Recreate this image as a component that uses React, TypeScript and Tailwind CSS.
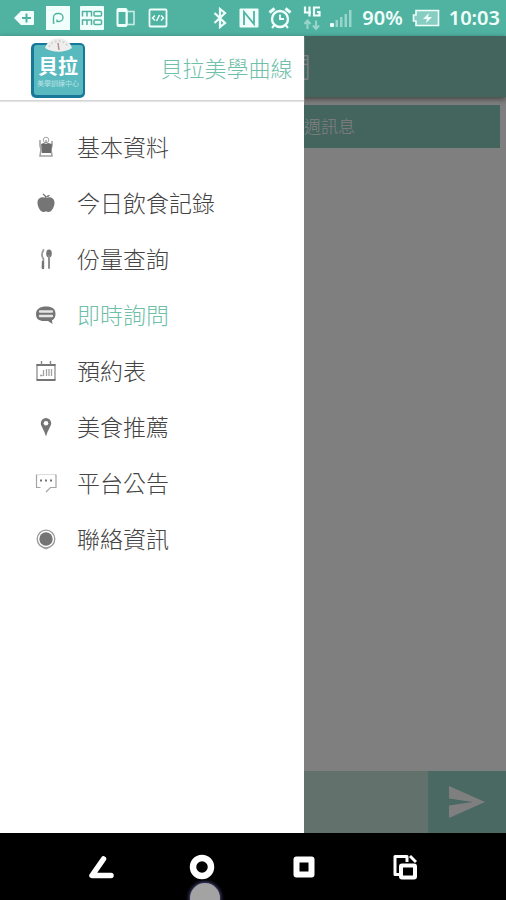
import type { ReactNode } from "react";

interface MenuItem {
  label: string;
  icon: ReactNode;
  active?: boolean;
}

const menuItems: MenuItem[] = [
  {
    label: "基本資料",
    icon: (
      <>
        <path d="M5 4v5c0 2 1 3 1 5l-1 6h12l-1-6c0-2 1-3 1-5V5" fill="none" stroke="#a3a3a3" strokeWidth="1.6" />
        <circle cx="11" cy="4" r="2.8" fill="#fff" stroke="#a3a3a3" />
        <path d="M6 8l3-1 2 1 2-1 4 1-1 9H7z" fill="#6b6b6b" />
        <path d="M11 4v3" stroke="#777" />
      </>
    ),
  },
  {
    label: "今日飲食記錄",
    icon: (
      <>
        <path d="M11 6c3-1.500 8.500-1 8.500 5 0 4-3 9-6 9-1 0-1.500-.5-2.500-.5s-1.500.5-2.500.5c-3 0-6-5-6-9 0-6 5.500-6.500 8.500-5z" fill="#757575" />
        <path d="M11 6C11 4 9.500 3 8 2" fill="none" stroke="#757575" strokeWidth="1.5" />
        <path d="M11 5c1-2 3-2 4-2-1 2-2 2-4 2z" fill="#757575" />
      </>
    ),
  },
  {
    label: "份量查詢",
    icon: (
      <>
        <ellipse cx="14" cy="5.5" rx="2.8" ry="4" fill="#757575" />
        <path d="M14 8v12" stroke="#8f8f8f" strokeWidth="2" strokeLinecap="round" />
        <path d="M8.500 2C6 6 7 9 8.500 11L7.500 19.500" fill="none" stroke="#999" strokeWidth="1.8" strokeLinecap="round" />
        <path d="M8 14v6" stroke="#757575" strokeWidth="2.4" strokeLinecap="round" />
      </>
    ),
  },
  {
    label: "即時詢問",
    active: true,
    icon: (
      <>
        <path d="M11 2.500c6 0 9.500 2 9.500 7.500 0 3-1 5-3.500 6.200l.5 3.800-4.500-3H9c-5 0-8-2-8-7s4-7.500 10-7.500z" fill="#757575" />
        <path d="M5 7.500h12M5 12h12" stroke="#e5e5e5" strokeWidth="2.4" strokeLinecap="round" />
      </>
    ),
  },
  {
    label: "預約表",
    icon: (
      <>
        <path d="M2 4.500h18v15H2z" fill="none" stroke="#858585" strokeWidth="1.2" />
        <path d="M1.500 5h19M1.500 20h19" stroke="#757575" strokeWidth="1.8" />
        <path d="M6.500 1v4M15.500 1v4" stroke="#858585" strokeWidth="1.4" />
        <path d="M5 15.500h2.500M8.500 10v6M11.500 9v7M14 9v7M16.500 9v7" stroke="#a3a3a3" strokeWidth="1.3" />
      </>
    ),
  },
  {
    label: "美食推薦",
    icon: (
      <>
        <path d="M11 2a5.200 5.200 0 0 1 5.200 5.200c0 3-3.200 6-5.200 13.300-2-7.300-5.200-10.300-5.200-13.300A5.200 5.200 0 0 1 11 2z" fill="#757575" />
        <circle cx="11" cy="7.2" r="2.3" fill="#fff" />
      </>
    ),
  },
  {
    label: "平台公告",
    icon: (
      <>
        <path d="M2.500 3h-1v12.500h4M20 3h1v12.500h-5.500L11 20" fill="none" stroke="#a3a3a3" strokeWidth="1.2" />
        <path d="M3 2.500h17" stroke="#ddd" />
        <path d="M5 8.500h2M10 8.500h2M15 8.500h2" stroke="#757575" strokeWidth="2" />
      </>
    ),
  },
  {
    label: "聯絡資訊",
    icon: (
      <>
        <circle cx="11" cy="11" r="8.8" fill="none" stroke="#999" strokeWidth="1.3" />
        <circle cx="11" cy="11" r="6.7" fill="#757575" />
        <path d="M8 19.500l3 1.500 3-1.500" fill="none" stroke="#999" />
      </>
    ),
  },
];

function StatusBar() {
  return (
    <header className="flex h-9 items-center justify-between bg-[#50b3a2] pr-[6px] pl-[14px] text-[#f0fffb]">
      <div className="flex items-center gap-3">
        <svg width="20" height="24" viewBox="0 0 20 24" aria-hidden="true">
          <path d="M7 5h12a1 1 0 0 1 1 1v12a1 1 0 0 1-1 1H7l-7-7z" fill="currentColor" />
          <path d="M8 12h9M12.500 7.500v9" stroke="#50b3a2" strokeWidth="2" />
        </svg>
        <div className="flex items-center gap-[10px]">
          <svg width="24" height="24" viewBox="0 0 24 24" aria-hidden="true">
            <rect width="24" height="24" fill="currentColor" />
            <path d="M8.500 17H7.500V11.500a4 4 0 0 1 4-4h1.500a4 4 0 0 1 0 8H11v-2" fill="none" stroke="#50b3a2" strokeWidth="1.4" />
          </svg>
          <svg width="24" height="24" viewBox="0 0 24 24" aria-hidden="true">
            <rect width="24" height="24" rx="1" fill="currentColor" />
            <g fill="none" stroke="#50b3a2" strokeWidth="1.5">
              <path d="M2.500 10.500V5.500h9v5M7 5.500v5" />
              <rect x="14" y="5.5" width="7.500" height="4.500" rx="1" />
              <path d="M2.500 19v-5h9v5M7 14v5" />
              <rect x="14" y="14" width="7.500" height="4.500" rx="1" />
            </g>
          </svg>
        </div>
        <svg width="20" height="22" viewBox="0 0 20 22" fill="none" stroke="currentColor" aria-hidden="true">
          <rect x="1.5" y="2" width="9" height="17" rx="1" strokeWidth="2" />
          <path d="M2 4h8M2 18h8" strokeWidth="2" />
          <rect x="11" y="4.5" width="7" height="13" strokeWidth="1.6" opacity=".75" />
        </svg>
        <svg width="20" height="20" viewBox="0 0 20 20" fill="none" stroke="currentColor" aria-hidden="true">
          <rect x="1.5" y="1.5" width="17" height="17" rx="1" strokeWidth="1.8" />
          <path d="M7 7.500L4.500 10 7 12.500M13 7.500l2.500 2.500-2.500 2.500M8.500 13l3-6" strokeWidth="1.5" />
        </svg>
      </div>
      <div className="flex items-center gap-[9px]">
        <div className="flex items-center gap-3">
          <svg width="14" height="22" viewBox="0 0 14 22" fill="none" stroke="currentColor" strokeWidth="2.2" aria-hidden="true">
            <path d="M1.500 6l10.500 10-5 4v-18L12 6 1.500 16" />
          </svg>
          <svg width="20" height="20" viewBox="0 0 20 20" aria-hidden="true">
            <rect x=".5" y=".5" width="19" height="19" rx="1" fill="currentColor" />
            <path d="M5 17V4L15 16V3" fill="none" stroke="#50b3a2" strokeWidth="1.8" />
          </svg>
        </div>
        <svg width="24" height="24" viewBox="0 0 24 24" fill="none" stroke="currentColor" aria-hidden="true">
          <circle cx="12" cy="13" r="8" strokeWidth="2.4" />
          <path d="M12 8.500V13h4" strokeWidth="1.8" />
          <path d="M1.500 6.500l5-4M22.500 6.500l-5-4" strokeWidth="3" />
          <path d="M6.500 19L4 22M17.500 19l2.500 3" strokeWidth="2" />
        </svg>
        <div className="flex items-center gap-2 pl-0.5">
          <svg width="18" height="26" viewBox="0 0 18 26" fill="none" stroke="currentColor" aria-hidden="true">
            <path d="M2 1.500v6h6M6.500 1.500v10M17 2.500h-6v8h5.500V7H14" strokeWidth="2.2" />
            <g opacity=".45" strokeWidth="2">
              <path d="M4.500 24v-8M1.500 19l3-3.500 3 3.500M13 15.500v8M10 20.500l3 3.500 3-3.500" />
            </g>
          </svg>
          <svg width="24" height="20" viewBox="0 0 24 20" fill="currentColor" aria-hidden="true">
            <rect x="1" y="15" width="4" height="4" rx="1" />
            <g opacity=".45">
              <rect x="6.500" y="12" width="2.500" height="7" />
              <rect x="11" y="9" width="2.500" height="10" />
              <rect x="15.500" y="6" width="2.500" height="13" />
              <rect x="20" y="2" width="2.500" height="17" />
            </g>
          </svg>
        </div>
        <span className="text-xl leading-none font-semibold">90%</span>
        <svg width="28" height="18" viewBox="0 0 28 18" fill="none" stroke="currentColor" aria-hidden="true">
          <path d="M4 1.500h22.500v15H4V12H1.500V6H4z" strokeWidth="1.6" fill="currentColor" fillOpacity=".35" />
          <path d="M17 4l-6 6h4l-1 4 6-6h-4z" fill="currentColor" stroke="none" />
        </svg>
        <span className="text-xl leading-none font-semibold">10:03</span>
      </div>
    </header>
  );
}

function Logo() {
  return (
    <svg width="54" height="60" viewBox="0 0 54 60" role="img" aria-label="貝拉">
      <rect x="0" y="5" width="54" height="55" rx="5" fill="#18789a" />
      <rect x="3" y="7" width="49" height="50" rx="3" fill="#58b9bf" />
      <path d="M14 10C18-3 37-3 41 10c-8 5-19 5-27 0z" fill="#eee" />
      <path d="M18 9c3-8 16-8 19 0" fill="none" stroke="#d4d4d4" strokeWidth="2" strokeDasharray="2 2" />
      <path d="M28 12l-1-7" stroke="#b8908c" strokeWidth="1.5" />
      <text x="27" y="36" textAnchor="middle" fontSize="20" fontWeight="700" fill="#fff">
        貝拉
      </text>
      <text x="27" y="48" textAnchor="middle" fontSize="7" fill="#b9e4e4">
        美學訓練中心
      </text>
    </svg>
  );
}

function ChatPage() {
  return (
    <main className="flex flex-1 flex-col bg-white">
      <div className="flex h-[61px] items-center justify-center bg-[#86cabc] pl-1 shadow-[0_2px_6px_rgba(0,0,0,0.5)]">
        <h1 className="text-[28px] font-light text-white">即時詢問</h1>
      </div>
      <button className="mx-[6px] mt-2 h-[43px] bg-[#86cabc] text-[17px] font-light text-white">
        點此可以載入最近一週訊息
      </button>
      <div className="flex-1" />
      <form className="flex h-[62px]">
        <input aria-label="訊息" className="min-w-0 flex-1 bg-[#c6e2d8] px-3 outline-none" />
        <button type="button" aria-label="傳送" className="flex w-[78px] items-center justify-center bg-[#94d2c4]">
          <svg width="36" height="32" viewBox="0 0 36 32" fill="#fff" aria-hidden="true">
            <path d="M0 0l36 16L0 32V19.500L24 16 0 12.500z" />
          </svg>
        </button>
      </form>
    </main>
  );
}

function Drawer() {
  return (
    <aside className="absolute inset-y-0 left-0 flex w-3/5 flex-col bg-white">
      <div className="flex h-[65px] items-center justify-between border-b border-[#d4d4d4] pr-[11px] pl-[31px] shadow-[0_1px_1px_#e5e5e5]">
        <Logo />
        <h2 className="text-[22px] font-light text-[#6fc0a8]">貝拉美學曲線</h2>
      </div>
      <nav className="pt-[18px]">
        <ul>
          {menuItems.map((item) => (
            <li key={item.label}>
              <a href="#" className="flex h-14 items-center gap-5 pl-[35px]">
                <svg width="22" height="22" viewBox="0 0 22 22" aria-hidden="true">
                  {item.icon}
                </svg>
                <span
                  className={
                    item.active
                      ? "text-[23px] leading-none font-light text-[#6fc0a8]"
                      : "text-[23px] leading-none font-light text-[#444]"
                  }
                >
                  {item.label}
                </span>
              </a>
            </li>
          ))}
        </ul>
      </nav>
    </aside>
  );
}

function NavBar() {
  return (
    <footer className="relative grid h-[67px] grid-cols-4 overflow-hidden bg-black px-[10%] text-white">
      <button aria-label="返回" className="flex items-center justify-center">
        <svg width="26" height="24" viewBox="0 0 26 24" fill="none" stroke="currentColor" strokeWidth="5.500" strokeLinecap="round" strokeLinejoin="round" aria-hidden="true">
          <path d="M15.500 4L4 20.500h19" />
        </svg>
      </button>
      <button aria-label="主畫面" className="flex items-center justify-center">
        <svg width="26" height="26" viewBox="0 0 26 26" fill="none" stroke="currentColor" strokeWidth="6.500" aria-hidden="true">
          <circle cx="13" cy="13" r="9" />
        </svg>
      </button>
      <button aria-label="最近" className="flex items-center justify-center">
        <svg width="22" height="22" viewBox="0 0 22 22" fill="none" stroke="currentColor" strokeWidth="6" aria-hidden="true">
          <rect x="3.500" y="3.500" width="15" height="15" strokeLinejoin="round" />
        </svg>
      </button>
      <button aria-label="小型應用程式" className="flex items-center justify-center">
        <svg width="24" height="26" viewBox="0 0 24 26" fill="none" stroke="currentColor" aria-hidden="true">
          <path d="M14 8V2.500H2v18h4" strokeWidth="3" strokeLinejoin="round" />
          <rect x="8" y="11.500" width="14" height="12" rx="1" strokeWidth="4" />
          <path d="M17 2l6 6" strokeWidth="3" />
        </svg>
      </button>
      <span className="absolute top-[50px] left-2/5 size-[30px] -translate-x-3 rounded-full bg-[#a3a3a3] shadow-[0_0_4px_#77c]" />
    </footer>
  );
}

export default function App() {
  return (
    <div className="flex min-h-screen flex-col font-['Noto_Sans','Noto_Sans_CJK_TC',sans-serif]">
      <StatusBar />
      <div className="relative flex flex-1 flex-col">
        <ChatPage />
        <div className="absolute inset-0 bg-black/50" />
        <Drawer />
      </div>
      <NavBar />
    </div>
  );
}
